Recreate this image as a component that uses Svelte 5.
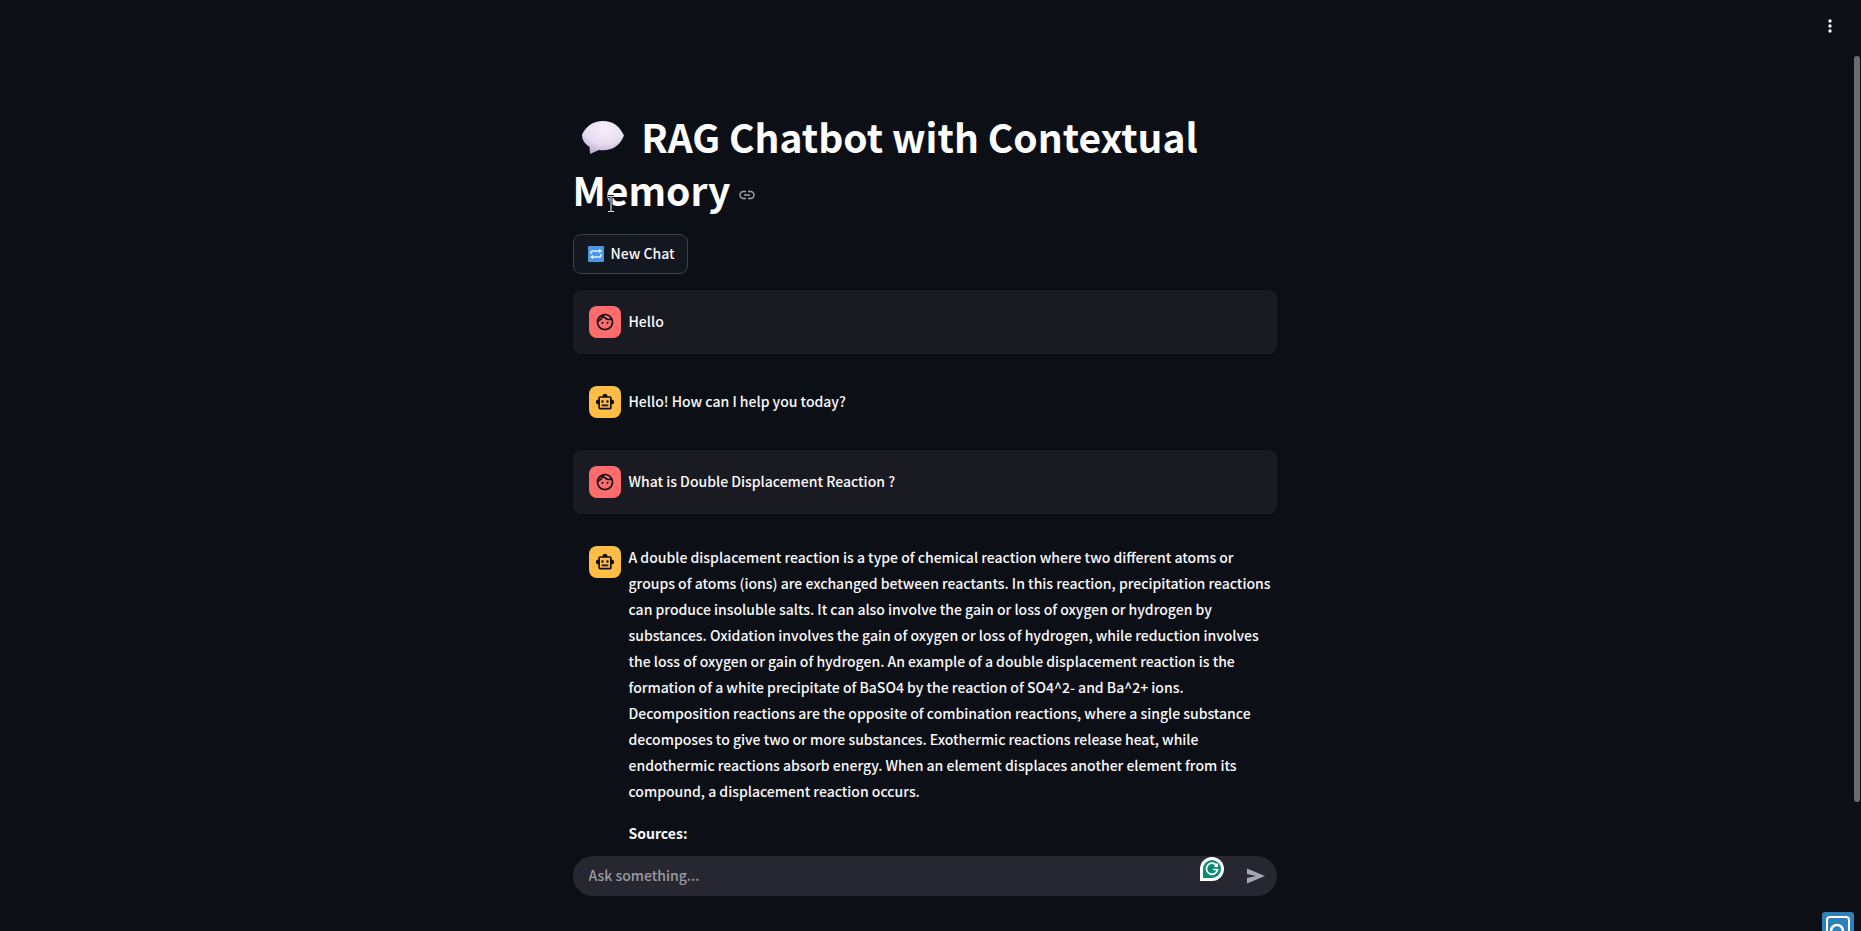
<script lang="ts">
  const messages = [
    { role: 'user', text: 'Hello' },
    { role: 'assistant', text: 'Hello! How can I help you today?' },
    { role: 'user', text: 'What is Double Displacement Reaction ?' },
    {
      role: 'assistant',
      text: `A double displacement reaction is a type of chemical reaction where two different atoms or
groups of atoms (ions) are exchanged between reactants. In this reaction, precipitation reactions
can produce insoluble salts. It can also involve the gain or loss of oxygen or hydrogen by
substances. Oxidation involves the gain of oxygen or loss of hydrogen, while reduction involves
the loss of oxygen or gain of hydrogen. An example of a double displacement reaction is the
formation of a white precipitate of BaSO4 by the reaction of SO4^2- and Ba^2+ ions.
Decomposition reactions are the opposite of combination reactions, where a single substance
decomposes to give two or more substances. Exothermic reactions release heat, while
endothermic reactions absorb energy. When an element displaces another element from its
compound, a displacement reaction occurs.`,
      sources: true
    }
  ];
  let question = $state('');
</script>

<div class="app">
  <button class="menu" type="button" aria-label="Main menu">
    <svg width="20" height="20" viewBox="0 0 24 24" fill="currentColor"><path d="M12 8a2 2 0 1 0 0-4 2 2 0 0 0 0 4zm0 2a2 2 0 1 0 0 4 2 2 0 0 0 0-4zm0 6a2 2 0 1 0 0 4 2 2 0 0 0 0-4z" /></svg>
  </button>

  <main class="scroll">
    <div class="column">
      <h1>
        <svg class="bubble" width="58" height="40" viewBox="0 0 58 40" aria-hidden="true">
          <defs>
            <radialGradient id="bubbleFill" cx="0.55" cy="0.2" r="0.9">
              <stop offset="0" stop-color="#f6f0fa" />
              <stop offset="0.55" stop-color="#e6ddf0" />
              <stop offset="1" stop-color="#b39dcb" />
            </radialGradient>
          </defs>
          <path fill="url(#bubbleFill)" d="M30 4C20 4 13.500 9 9 17.500c0 6 3 9.500 7.500 12.200L17 37l9-4c1.300.2 2.600.2 4 .2 10 0 17-4.700 21-14.700C46.500 9 40 4 30 4z" />
        </svg>
        RAG Chatbot with Contextual Memory
        <a class="anchor" href="#rag-chatbot" aria-label="Link to heading">
          <svg width="16" height="16" viewBox="0 0 16 16" fill="none" stroke="currentColor" stroke-width="1.500"><path d="M7 4.500H4.500a3.500 3.500 0 0 0 0 7H7M9 4.500h2.500a3.500 3.500 0 0 1 0 7H9M5 8h6" /></svg>
        </a>
      </h1>

      <button class="new-chat" type="button">
        <svg width="16" height="16" viewBox="0 0 16 16" aria-hidden="true">
          <rect width="16" height="16" rx="1" fill="#4a97ea" />
          <path d="M3 8V6.500Q3 5 4.500 5H12M13 8v1.500Q13 11 11.500 11H4" fill="none" stroke="#e4f3ff" stroke-width="1.500" />
          <path d="M11 2.800 14 5l-3 2.200zM5 8.800 2 11l3 2.200z" fill="#e4f3ff" />
        </svg>
        <span>New Chat</span>
      </button>

      {#each messages as message}
        <article class="message {message.role}">
          <div class="avatar">
            {#if message.role === 'user'}
              <svg width="20" height="20" viewBox="0 0 24 24" fill="currentColor"><path d="M10.250 13a1.250 1.250 0 1 1-2.500 0 1.250 1.250 0 0 1 2.500 0zM15 11.750a1.250 1.250 0 1 0 0 2.500 1.250 1.250 0 0 0 0-2.500zM22 12c0 5.520-4.480 10-10 10S2 17.520 2 12 6.480 2 12 2s10 4.480 10 10zM10.660 4.120C12.060 6.440 14.600 8 17.500 8c.46 0 .91-.05 1.340-.12C17.440 5.560 14.900 4 12 4c-.46 0-.91.05-1.340.12zM4.420 9.470a8.046 8.046 0 0 0 3.660-4.440 8.046 8.046 0 0 0-3.660 4.440zM20 12c0-.78-.12-1.530-.33-2.240-.7.15-1.420.24-2.170.24a9.980 9.980 0 0 1-7.760-3.690A10.016 10.016 0 0 1 4 11.860c.01.04 0 .09 0 .14 0 4.410 3.590 8 8 8s8-3.590 8-8z" /></svg>
            {:else}
              <svg width="20" height="20" viewBox="0 0 24 24" fill="currentColor"><path d="M20 9V7c0-1.100-.9-2-2-2h-3c0-1.660-1.340-3-3-3S9 3.340 9 5H6c-1.100 0-2 .9-2 2v2c-1.660 0-3 1.340-3 3s1.340 3 3 3v4c0 1.100.9 2 2 2h12c1.100 0 2-.9 2-2v-4c1.660 0 3-1.340 3-3s-1.340-3-3-3zm-2 10H6V7h12v12zm-9-6c-.83 0-1.500-.67-1.500-1.500S8.170 10 9 10s1.500.67 1.500 1.500S9.830 13 9 13zm7.500-1.500c0 .83-.67 1.500-1.500 1.500s-1.500-.67-1.500-1.500.67-1.500 1.500-1.500 1.500.67 1.500 1.500zM8 15h8v2H8v-2z" /></svg>
            {/if}
          </div>
          <div class="body">
            <p>{message.text}</p>
            {#if message.sources}
              <p><strong>Sources:</strong></p>
            {/if}
          </div>
        </article>
      {/each}
    </div>
  </main>

  <footer class="bottom">
    <form class="ask" onsubmit={(event) => event.preventDefault()}>
      <input type="text" placeholder="Ask something..." aria-label="Ask something" bind:value={question} />
      <svg class="writing-badge" width="24" height="24" viewBox="0 0 24 24" aria-hidden="true">
        <path d="M0 24V12A12 12 0 1 1 12 24z" fill="#fff" />
        <path d="M3 21v-9a9 9 0 1 1 9 9z" fill="#0e8a73" />
        <path d="M16.300 8A5.600 5.600 0 1 0 17.600 12.500H13M14.500 9.200h2.600V6.600" fill="none" stroke="#fff" stroke-width="1.700" />
      </svg>
      <button class="send" type="submit" aria-label="Send message">
        <svg width="20" height="20" viewBox="0 0 20 20" fill="currentColor"><path d="M1 2.500 19 10 1 17.500V12l9-2-9-2z" /></svg>
      </button>
    </form>
  </footer>

  <div class="scrollbar"></div>
  <svg class="pointer" width="10" height="18" viewBox="-1 -1 10 18" fill="none" aria-hidden="true">
    <path d="M1 .5h2.500l.5.500.5-.5H7M4 1v14M1 15.500h2.500l.5-.5.5.5H7" stroke="#0c0f16" stroke-width="3" />
    <path d="M1 .5h2.500l.5.500.5-.5H7M4 1v14M1 15.500h2.500l.5-.5.5.5H7" stroke="#fff" />
  </svg>
  <button class="widget" type="button" aria-label="Screen capture">
    <svg width="32" height="32" viewBox="0 0 32 32" fill="none"><rect width="32" height="32" rx="3" fill="#2f80b7" /><rect x="5" y="5" width="22" height="22" rx="3" stroke="#fff" stroke-width="2" /><circle cx="15" cy="19" r="6" stroke="#fff" stroke-width="2.500" /></svg>
  </button>
</div>

<style>
  :global(body) {
    margin: 0;
    background: #0c0f16;
  }
  .app {
    position: relative;
    display: flex;
    flex-direction: column;
    height: 100vh;
    overflow: hidden;
    box-sizing: border-box;
    padding-right: 12px;
    background: #0c0f16;
    color: #fafafa;
    font-family: "Noto Sans CJK SC", "Noto Sans", sans-serif;
    font-size: 14px;
    font-weight: 500;
    line-height: 26px;
  }
  button {
    font: inherit;
    color: inherit;
    cursor: pointer;
  }
  svg {
    display: block;
  }
  .scroll {
    flex: 1;
    min-height: 0;
    overflow: hidden;
  }
  .column {
    display: flex;
    flex-direction: column;
    align-items: flex-start;
    gap: 16px;
    max-width: 704px;
    margin: 0 auto;
    padding-top: 110px;
  }
  h1 {
    margin: 0;
    padding-bottom: 2px;
    font-size: 39px;
    line-height: 53px;
    font-weight: 700;
    color: #fff;
  }
  .bubble {
    display: inline-block;
    margin-right: 2px;
    vertical-align: -4px;
  }
  .anchor {
    display: inline-block;
    color: #a0a2a8;
    vertical-align: 3px;
  }
  .new-chat {
    display: flex;
    align-items: center;
    gap: 7px;
    height: 40px;
    padding: 0 12px 0 14px;
    border: 1px solid #3d4047;
    border-radius: 8px;
    background: #131720;
  }
  .new-chat span {
    padding-bottom: 2px;
  }
  .message {
    display: flex;
    gap: 8px;
    align-self: stretch;
    padding: 16px 0 16px 16px;
    border-radius: 8px;
  }
  .message.user {
    background: #1a1b22;
  }
  .avatar {
    display: flex;
    align-items: center;
    justify-content: center;
    flex: none;
    width: 32px;
    height: 32px;
    border-radius: 8px;
    background: #ffbd45;
    color: #0e1117;
  }
  .user .avatar {
    background: #ff6c6c;
  }
  .body {
    display: flex;
    flex-direction: column;
    justify-content: center;
    gap: 16px;
    margin-top: -2px;
  }
  p {
    margin: 0;
    white-space: pre-line;
  }
  .bottom {
    padding-bottom: 35px;
  }
  .ask {
    display: flex;
    align-items: center;
    max-width: 704px;
    height: 40px;
    margin: 0 auto;
    padding: 0 11px 0 16px;
    box-sizing: border-box;
    border-radius: 20px;
    background: #262730;
  }
  input {
    flex: 1;
    min-width: 0;
    padding: 0 0 2px;
    border: 0;
    outline: 0;
    background: none;
    color: inherit;
    font: inherit;
  }
  input::placeholder {
    color: #9a9ba1;
    opacity: 1;
  }
  .writing-badge {
    align-self: flex-start;
    margin: 1px 22px 0 0;
  }
  .send {
    padding: 0;
    border: 0;
    background: none;
    color: #a6a7b0;
  }
  .menu {
    position: absolute;
    top: 16px;
    right: 21px;
    padding: 0;
    border: 0;
    background: none;
  }
  .scrollbar {
    position: absolute;
    top: 56px;
    right: 1px;
    bottom: 129px;
    width: 6px;
    border-radius: 3px;
    background: #6b6c70;
  }
  .pointer {
    position: absolute;
    top: 195px;
    left: 606px;
  }
  .widget {
    position: absolute;
    right: 7px;
    bottom: -13px;
    padding: 0;
    border: 0;
    background: none;
  }
</style>
